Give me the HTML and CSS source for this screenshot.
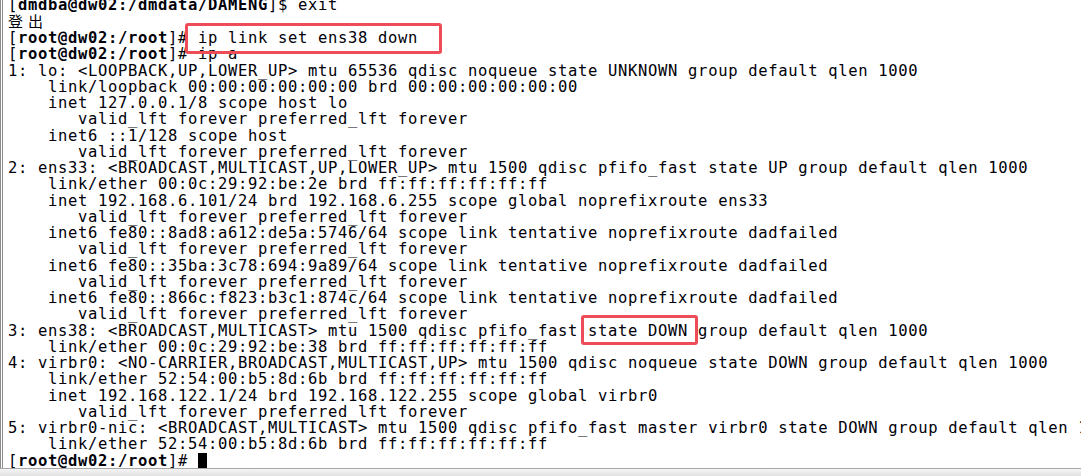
FILE: index.html
```html
<!DOCTYPE html>
<html>
<head>
<meta charset="utf-8">
<link rel="stylesheet" href="styles.css">
</head>
<body>
<div class="window">
  <div class="screen">
<pre class="term">[<b>dmdba@dw02:/dmdata/DAMENG</b>]$ exit
<span class="wide">登</span><span class="wide">出</span>
[<b>root@dw02:/root</b>]# ip link set ens38 down
[<b>root@dw02:/root</b>]# ip a
1: lo: &lt;LOOPBACK,UP,LOWER_UP&gt; mtu 65536 qdisc noqueue state UNKNOWN group default qlen 1000
    link/loopback 00:00:00:00:00:00 brd 00:00:00:00:00:00
    inet 127.0.0.1/8 scope host lo
       valid_lft forever preferred_lft forever
    inet6 ::1/128 scope host
       valid_lft forever preferred_lft forever
2: ens33: &lt;BROADCAST,MULTICAST,UP,LOWER_UP&gt; mtu 1500 qdisc pfifo_fast state UP group default qlen 1000
    link/ether 00:0c:29:92:be:2e brd ff:ff:ff:ff:ff:ff
    inet 192.168.6.101/24 brd 192.168.6.255 scope global noprefixroute ens33
       valid_lft forever preferred_lft forever
    inet6 fe80::8ad8:a612:de5a:5746/64 scope link tentative noprefixroute dadfailed
       valid_lft forever preferred_lft forever
    inet6 fe80::35ba:3c78:694:9a89/64 scope link tentative noprefixroute dadfailed
       valid_lft forever preferred_lft forever
    inet6 fe80::866c:f823:b3c1:874c/64 scope link tentative noprefixroute dadfailed
       valid_lft forever preferred_lft forever
3: ens38: &lt;BROADCAST,MULTICAST&gt; mtu 1500 qdisc pfifo_fast state DOWN group default qlen 1000
    link/ether 00:0c:29:92:be:38 brd ff:ff:ff:ff:ff:ff
4: virbr0: &lt;NO-CARRIER,BROADCAST,MULTICAST,UP&gt; mtu 1500 qdisc noqueue state DOWN group default qlen 1000
    link/ether 52:54:00:b5:8d:6b brd ff:ff:ff:ff:ff:ff
    inet 192.168.122.1/24 brd 192.168.122.255 scope global virbr0
       valid_lft forever preferred_lft forever
5: virbr0-nic: &lt;BROADCAST,MULTICAST&gt; mtu 1500 qdisc pfifo_fast master virbr0 state DOWN group default qlen 1000
    link/ether 52:54:00:b5:8d:6b brd ff:ff:ff:ff:ff:ff
[<b>root@dw02:/root</b>]# <span class="cursor"></span></pre>
    <div class="mark mark-cmd"></div>
    <div class="mark mark-state"></div>
  </div>
  <div class="statusedge"></div>
</div>
</body>
</html>
```
FILE: styles.css
```css
html, body {
  margin: 0;
  padding: 0;
  background: #ffffff;
}
.window {
  width: 1081px;
  height: 476px;
  display: flex;
  flex-direction: column;
  overflow: hidden;
}
.screen {
  position: relative;
  flex: 1;
  border-left: 3px double #8c8c8c;
  overflow: hidden;
  padding-left: 5px;
}
.term {
  margin: -3.5px 0 0 0;
  font-family: "DejaVu Sans Mono", "Liberation Mono", monospace;
  font-size: 15.5px;
  letter-spacing: 0.67px;
  line-height: 16.25px;
  color: #000008;
  white-space: pre;
}
.term b {
  font-weight: bold;
}
.wide {
  display: inline-block;
  width: 20px;
  font-family: "Noto Sans CJK SC", sans-serif;
  font-size: 15px;
  letter-spacing: 0;
}
.cursor {
  display: inline-block;
  width: 9px;
  height: 15px;
  background: #000000;
  vertical-align: -2px;
}
.mark {
  position: absolute;
  border: 3px solid #ee4d57;
  border-radius: 3px;
  box-sizing: border-box;
}
.mark-cmd {
  left: 182px;
  top: 23px;
  width: 257px;
  height: 31px;
}
.mark-state {
  left: 578px;
  top: 315px;
  width: 117px;
  height: 30px;
}
.statusedge {
  height: 7px;
  border-top: 1px solid #a8a8a8;
  background: linear-gradient(#f4f4f4, #e2e2e2);
}
```
